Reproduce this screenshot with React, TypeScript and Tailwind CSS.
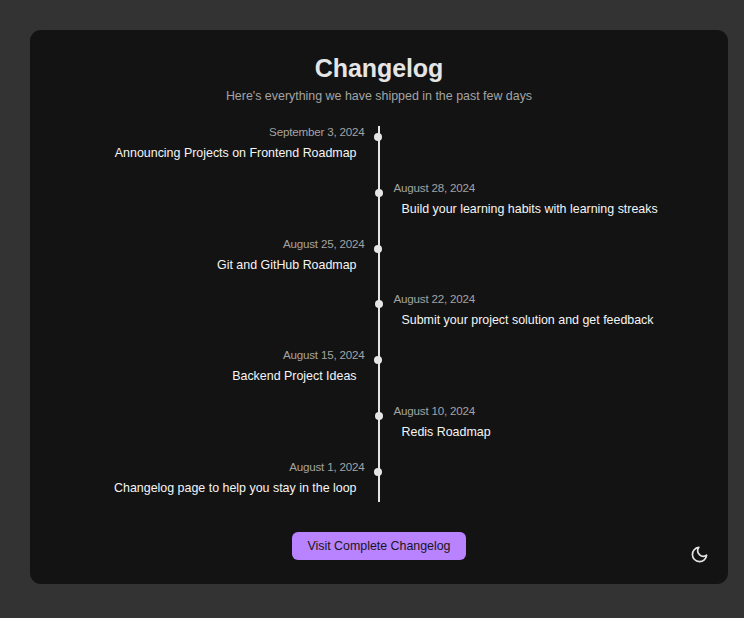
type Entry = { date: string; title: string };

const entries: Entry[] = [
  { date: "September 3, 2024", title: "Announcing Projects on Frontend Roadmap" },
  { date: "August 28, 2024", title: "Build your learning habits with learning streaks" },
  { date: "August 25, 2024", title: "Git and GitHub Roadmap" },
  { date: "August 22, 2024", title: "Submit your project solution and get feedback" },
  { date: "August 15, 2024", title: "Backend Project Ideas" },
  { date: "August 10, 2024", title: "Redis Roadmap" },
  { date: "August 1, 2024", title: "Changelog page to help you stay in the loop" },
];

function TimelineRow({ entry, left }: { entry: Entry; left: boolean }) {
  return (
    <li className={`relative flex h-[55.8px] ${left ? "justify-start" : "justify-end"}`}>
      <div className={`w-[334.5px] whitespace-nowrap ${left ? "text-right" : "text-left"}`}>
        <time className="block text-[11.6px] leading-[12px] tracking-[-0.19px] text-[#a3a3a3]">{entry.date}</time>
        <p className="mt-[8px] px-2 text-[12.43px] leading-[14px] text-[#f5f5f5]">{entry.title}</p>
      </div>
      <span
        className={`absolute top-[7px] size-2 rounded-full bg-[#e5e5e5] ${left ? "left-[344.4px]" : "left-[345.2px]"}`}
      />
    </li>
  );
}

export default function App() {
  return (
    <div className="h-[618px] w-[744px] bg-[#333333] pt-[30px] pl-[30px] font-['Liberation_Sans',Arial,sans-serif]">
      <main className="relative flex h-[554px] w-[698px] flex-col items-center rounded-[11px] bg-[#131313]">
        <h1 className="mt-[23px] text-[25px] leading-[30px] font-bold tracking-[-0.1px] text-[#e5e5e5]">Changelog</h1>
        <p className="mt-[6px] text-[12.43px] leading-[14px] text-[#a3a3a3]">
          Here's everything we have shipped in the past few days
        </p>
        <section className="relative mt-[23px] h-[376px] w-full">
          <div className="absolute top-0 left-[348px] h-[376px] w-[2px] bg-[#e5e5e5]" />
          <ol>
            {entries.map((entry, i) => (
              <TimelineRow key={entry.date} entry={entry} left={i % 2 === 0} />
            ))}
          </ol>
        </section>
        <button className="mt-[30px] h-7 w-[174px] rounded-[6px] bg-[#b982ff] text-[12.4px] leading-[28px] text-[#171717]">
          Visit Complete Changelog
        </button>
        <button aria-label="Toggle theme" className="absolute right-[19px] bottom-[20px] text-[#e5e5e5]">
          <svg className="block size-[19px]" viewBox="0 0 24 24" fill="none" stroke="currentColor" strokeWidth="2.1" strokeLinecap="round" strokeLinejoin="round">
            <path d="M21 12.79A9 9 0 1 1 11.21 3 7 7 0 0 0 21 12.79z" />
          </svg>
        </button>
      </main>
    </div>
  );
}
